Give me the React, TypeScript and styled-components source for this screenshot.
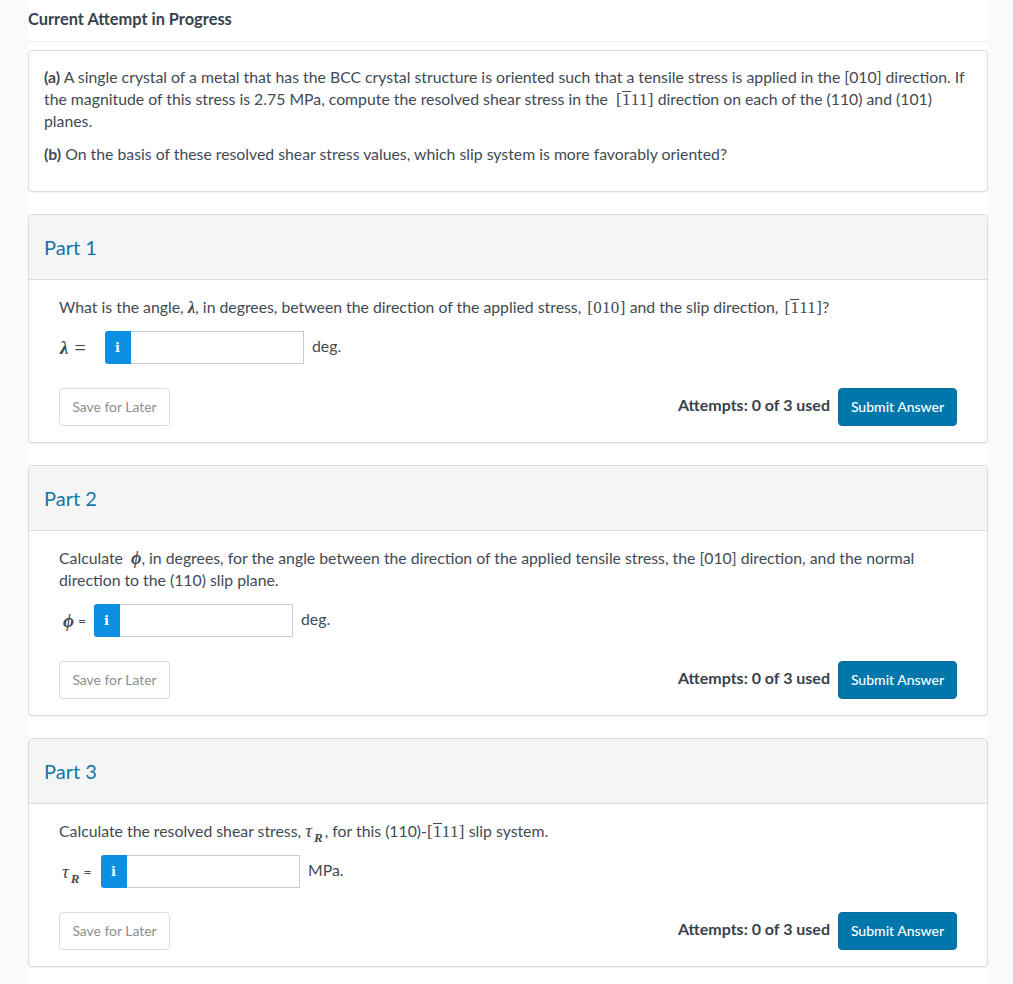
import React from "react";
import styled, { createGlobalStyle } from "styled-components";

const GlobalStyle = createGlobalStyle`
  html, body {
    margin: 0;
    padding: 0;
    background: #fafafa;
  }
  body {
    font-family: Lato, "Open Sans", sans-serif;
    font-size: 15.8px;
    line-height: 22px;
    color: #3f4a54;
  }
`;

const Page = styled.div`
  width: 960px;
  margin-left: 28px;
  padding-bottom: 17px;
  background: #fff;
`;

const Title = styled.div`
  height: 41px;
  border-bottom: 1px solid #eeeeee;
  margin-bottom: 8px;
  font-size: 16.4px;
  font-weight: 700;
  line-height: 38px;
  color: #36424c;
`;

const Card = styled.section`
  border: 1px solid #dcdcdc;
  border-radius: 4px;
  background: #fff;
  box-shadow: 0 1px 1px rgba(0, 0, 0, 0.05);
  margin-bottom: 22px;
  &:last-child {
    margin-bottom: 0;
  }
`;

const ProblemBody = styled.div`
  height: 140px;
  padding: 15px 15px 0;
  box-sizing: border-box;
`;

const Para = styled.p`
  margin: 0 0 11px;
`;

const PartHeader = styled.header`
  height: 64px;
  padding-left: 15px;
  background: #f5f5f5;
  border-bottom: 1px solid #dcdcdc;
  border-radius: 3px 3px 0 0;
  font-size: 20px;
  line-height: 65px;
  color: #0f76a8;
`;

const PartBody = styled.div`
  padding: 16px 30px 16px;
`;

const Question = styled.p`
  margin: 0 0 13px;
`;

const Serif = styled.span`
  font-family: "Liberation Serif", "Times New Roman", serif;
  font-size: 17px;
  letter-spacing: 0.3px;
  line-height: 1;
`;

const Bar = styled.span`
  display: inline-block;
  position: relative;
  &::before {
    content: "";
    position: absolute;
    left: 0;
    right: 0;
    top: 0;
    height: 1px;
    background: #3f4a54;
  }
`;

const MathVar = styled.i<{ $light?: boolean; $size?: number }>`
  font-family: "Liberation Serif", "Times New Roman", serif;
  font-size: ${({ $size }) => $size ?? 17}px;
  font-weight: ${({ $light }) => ($light ? 400 : 700)};
  line-height: 1;
  sub {
    font-size: 13px;
    font-weight: 700;
    line-height: 0;
    margin: 0 2px;
  }
`;

const AnswerRow = styled.div`
  display: flex;
  align-items: center;
  height: 33px;
  margin-bottom: 24px;
`;

const Label = styled.span<{ $width: number; $pad: number; $gap: number }>`
  display: flex;
  align-items: center;
  gap: ${({ $gap }) => $gap}px;
  box-sizing: border-box;
  width: ${({ $width }) => $width}px;
  padding-left: ${({ $pad }) => $pad}px;
  white-space: nowrap;
`;

const Equals = styled.span<{ $large?: boolean }>`
  font-family: ${({ $large }) => ($large ? '"Liberation Serif", serif' : "Lato, sans-serif")};
  font-size: ${({ $large }) => ($large ? 20 : 14)}px;
`;

const InfoButton = styled.span`
  display: flex;
  align-items: center;
  justify-content: center;
  width: 26px;
  height: 33px;
  padding-right: 1px;
  box-sizing: border-box;
  background: #0a8fe3;
  border-radius: 3px 0 0 3px;
  color: #fff;
  font-family: "DejaVu Serif", serif;
  font-size: 13px;
  font-weight: 700;
`;

const Field = styled.input`
  width: 173px;
  height: 33px;
  box-sizing: border-box;
  border: 1px solid #cccccc;
  border-left: none;
  padding: 0 8px;
  background: #fff;
  outline: none;
`;

const Unit = styled.span`
  position: relative;
  top: -2px;
  margin-left: 8px;
`;

const Footer = styled.div`
  display: flex;
  align-items: center;
  justify-content: space-between;
`;

const SaveButton = styled.button`
  width: 111px;
  height: 38px;
  padding: 0 0 2px;
  border: 1px solid #dcdcdc;
  border-radius: 4px;
  background: #fff;
  color: #8a8f94;
  font-family: Lato, sans-serif;
  font-size: 13.9px;
`;

const Actions = styled.div`
  display: flex;
  align-items: center;
  gap: 8px;
`;

const Attempts = styled.span`
  position: relative;
  top: -2px;
  font-size: 16px;
  font-weight: 700;
  color: #36424c;
`;

const SubmitButton = styled.button`
  width: 119px;
  height: 38px;
  padding: 0 0 2px;
  border: 1px solid #0a6c9c;
  border-radius: 4px;
  background: #0077ab;
  color: #fff;
  font-family: Lato, sans-serif;
  font-size: 14px;
  font-weight: 500;
`;

const Slip = () => (
  <Serif>
    [<Bar>1</Bar>11]
  </Serif>
);

type PartProps = {
  name: string;
  question: React.ReactNode;
  label: React.ReactNode;
  labelWidth: number;
  labelPad: number;
  labelGap: number;
  unit: string;
};

const Part = ({ name, question, label, labelWidth, labelPad, labelGap, unit }: PartProps) => (
  <Card>
    <PartHeader>{name}</PartHeader>
    <PartBody>
      <Question>{question}</Question>
      <AnswerRow>
        <Label $width={labelWidth} $pad={labelPad} $gap={labelGap}>
          {label}
        </Label>
        <InfoButton>i</InfoButton>
        <Field aria-label={name} />
        <Unit>{unit}</Unit>
      </AnswerRow>
      <Footer>
        <SaveButton>Save for Later</SaveButton>
        <Actions>
          <Attempts>Attempts: 0 of 3 used</Attempts>
          <SubmitButton>Submit Answer</SubmitButton>
        </Actions>
      </Footer>
    </PartBody>
  </Card>
);

export default function App() {
  return (
    <Page>
      <GlobalStyle />
      <Title>Current Attempt in Progress</Title>
      <Card>
        <ProblemBody>
          <Para>
            <b>(a)</b> A single crystal of a metal that has the BCC crystal structure is oriented such that a tensile
            stress is applied in the [010] direction. If the magnitude of this stress is 2.75 MPa, compute the resolved
            shear stress in the &nbsp;<Slip /> direction on each of the (110) and (101) planes.
          </Para>
          <Para>
            <b>(b)</b> On the basis of these resolved shear stress values, which slip system is more favorably oriented?
          </Para>
        </ProblemBody>
      </Card>
      <Part
        name="Part 1"
        question={
          <>
            What is the angle, <MathVar>λ</MathVar>, in degrees, between the direction of the applied stress, {"\u2009"}
            <Serif>[010]</Serif> and the slip direction, {"\u2009"}
            <Slip />?
          </>
        }
        label={
          <>
            <MathVar $size={19}>λ</MathVar>
            <Equals $large>=</Equals>
          </>
        }
        labelWidth={46}
        labelPad={1}
        labelGap={6}
        unit="deg."
      />
      <Part
        name="Part 2"
        question={
          <>
            Calculate &nbsp;<MathVar $size={18}>ϕ</MathVar>, in degrees, for the angle between the direction of the
            applied tensile stress, the [010] direction, and the normal direction to the (110) slip plane.
          </>
        }
        label={
          <>
            <MathVar $size={19}>ϕ</MathVar>
            <Equals>=</Equals>
          </>
        }
        labelWidth={35}
        labelPad={4}
        labelGap={4}
        unit="deg."
      />
      <Part
        name="Part 3"
        question={
          <>
            Calculate the resolved shear stress,{" "}
            <MathVar $light $size={19}>
              τ<sub>R</sub>
            </MathVar>
            , for this (110)-
            <Slip /> slip system.
          </>
        }
        label={
          <>
            <MathVar $light $size={19}>
              τ<sub>R</sub>
            </MathVar>
            <Equals>=</Equals>
          </>
        }
        labelWidth={42}
        labelPad={3}
        labelGap={2}
        unit="MPa."
      />
    </Page>
  );
}
